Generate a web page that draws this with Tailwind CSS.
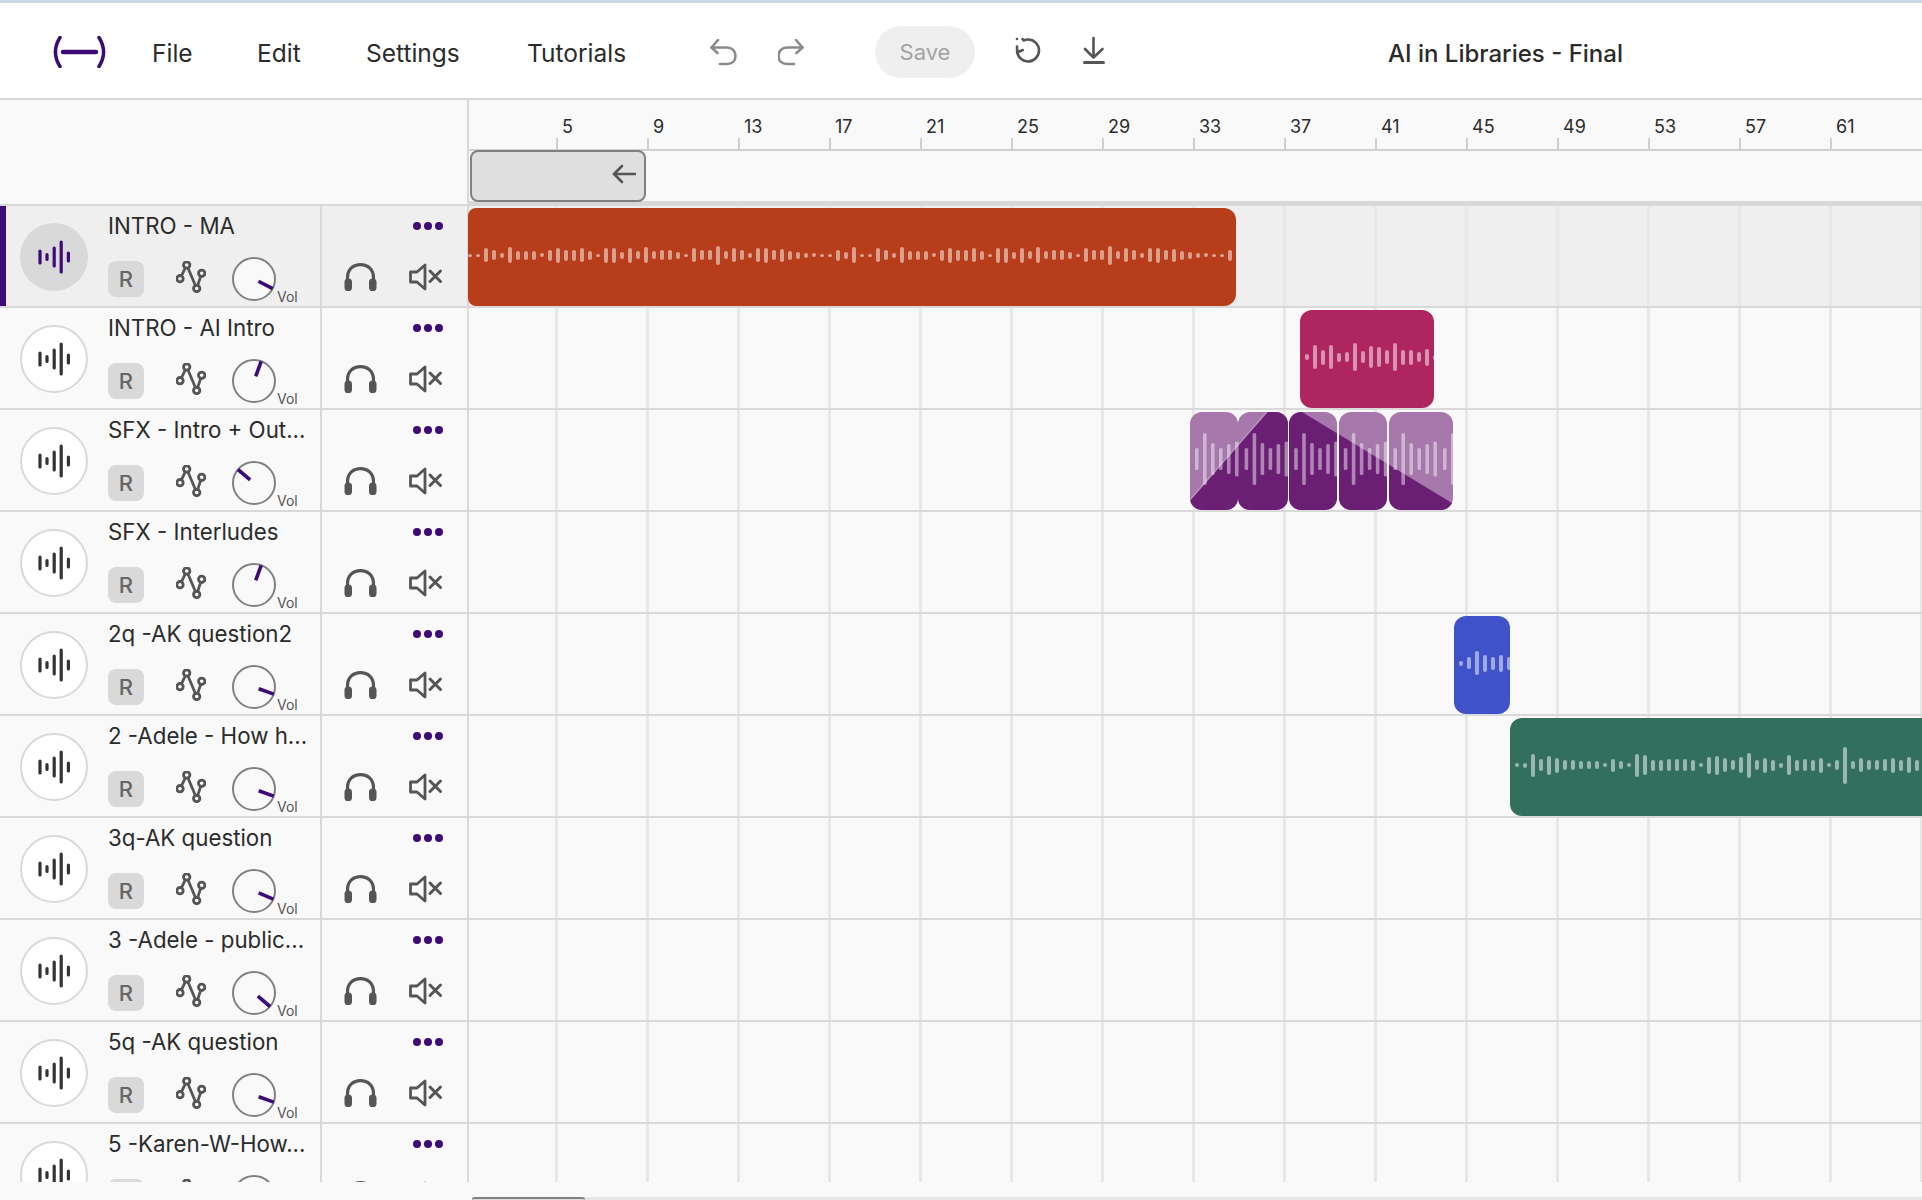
<!DOCTYPE html>
<html lang="en">

<head>
    <meta charset="utf-8" />
    <meta name="viewport" content="width=device-width, initial-scale=1" />
    <title>AI in Libraries - Final</title>
    <script src="https://cdn.jsdelivr.net/npm/@tailwindcss/browser@4"></script>
</head>

<body class="bg-[#f9f9f9] font-['Inter',sans-serif] text-[#2b2b2b] overflow-hidden">
    <div class="flex flex-col w-[1922px] h-[1200px] overflow-hidden relative">
        <div class="h-[3px] bg-[#c9dae7] shrink-0"></div>

        <!-- top bar -->
        <header class="relative flex items-center h-[97px] shrink-0 bg-white border-b-2 border-[#d8d8d8] text-[24.5px]">
            <svg class="absolute left-[51px] top-[33px]" width="57" height="32" viewBox="0 0 57 32" fill="none" stroke="#3d0a78" stroke-linecap="round">
                <path d="M9 1.5 C3 11 3 21 9 30.5" stroke-width="3.5" />
                <path d="M48 1.5 C54 11 54 21 48 30.5" stroke-width="3.5" />
                <path d="M12 16 H45" stroke-width="4.5" />
            </svg>
            <nav class="flex items-center ml-[152px] mt-[5px]">
                <span class="w-[105px]">File</span>
                <span class="w-[109px]">Edit</span>
                <span class="w-[161px]">Settings</span>
                <span class="w-[99px] whitespace-nowrap">Tutorials</span>
            </nav>
            <svg class="ml-[84px] mt-[4px]" width="28" height="28" viewBox="0 0 28 28" fill="none" stroke="#8a8a8a" stroke-width="2.6" stroke-linecap="round" stroke-linejoin="round">
                <path d="M8 1 L1.5 8.5 L7.5 14" />
                <path d="M1.5 8.5 H17 C22 8.5 25.5 12 25.5 17 C25.5 22 22 25 17 25 H10" />
            </svg>
            <svg class="ml-[40px] mt-[4px]" width="28" height="28" viewBox="0 0 28 28" fill="none" stroke="#8a8a8a" stroke-width="2.6" stroke-linecap="round" stroke-linejoin="round">
                <path d="M18 1 L24.5 8.5 L18.5 14" />
                <path d="M24.5 8.5 H9 C4 8.5 0.5 12 0.5 17 C0.5 22 4 25 9 25 H16" />
            </svg>
            <div class="ml-[69px] mt-[3px] flex items-center justify-center w-[100px] h-[52px] rounded-full bg-[#efefef] text-[22px] text-[#a3a3a3]">Save</div>
            <svg class="ml-[39px] -mt-[2px]" width="28" height="28" viewBox="0 0 28 28" fill="none" stroke="#555" stroke-width="2.6" stroke-linecap="round" stroke-linejoin="round">
                <path d="M9.5 4.5 C11 3.8 12.5 3.5 14 3.5 C20 3.5 25 8 25 14.5 C25 20.5 20 25.5 14 25.5 C8.5 25.5 4 21.5 3.2 16" />
                <path d="M3 10.5 L3.2 16.5 L8.8 14" />
                <circle cx="3" cy="3" r="1.3" fill="#555" stroke="none" />
                <circle cx="8.5" cy="3" r="1.3" fill="#555" stroke="none" />
            </svg>
            <svg class="ml-[40px] -mt-[2px]" width="24" height="28" viewBox="0 0 24 28" fill="none" stroke="#555" stroke-width="2.6" stroke-linecap="round" stroke-linejoin="round">
                <path d="M11.5 2 V21" />
                <path d="M3 13 L11.5 21.5 L20.5 13" />
            </svg>
            <div class="absolute left-[1083px] top-[58px] w-[22px] h-[3px] rounded-full bg-[#555]"></div>
            <div class="absolute left-[1388px] top-[37px] font-medium text-[24px] leading-7 text-[#2b2b2b]">AI in Libraries - Final</div>
        </header>

        <!-- ruler -->
        <div class="flex h-[106px] shrink-0">
            <div class="w-[469px] shrink-0 border-r-2 border-b-2 border-[#d8d8d8]"></div>
            <div class="flex-1 relative flex flex-col">
                <div id="ruler" class="flex h-[49px] pl-[87px] border-b-2 border-[#d0d0d0] box-content"></div>
                <div class="flex-1"></div>
                <div class="h-[5px] bg-[#d8d8d8]"></div>
                <div class="absolute left-[1px] top-[50px] w-[176px] h-[52px] rounded-lg border-2 border-[#808080] bg-[#dfdfdf] flex items-center justify-end pr-[8px]">
                    <svg class="-mt-[4px]" width="24" height="20" viewBox="0 0 24 20" fill="none" stroke="#555" stroke-width="2.6" stroke-linecap="round" stroke-linejoin="round">
                        <path d="M2 10 H23" />
                        <path d="M10 2 L2 10 L10 18" />
                    </svg>
                </div>
            </div>
        </div>

        <!-- tracks -->
        <div id="tracks" class="h-[976px] shrink-0 overflow-hidden"></div>

        <!-- scrollbar -->
        <div class="flex-1 relative">
            <div class="absolute left-[472px] right-0 bottom-0 h-[3px] bg-[#e6e6e6]"></div>
            <div class="absolute left-[472px] w-[113px] bottom-0 h-[3px] rounded-t border-t-2 border-[#808080] bg-[#dfdfdf]"></div>
        </div>
    </div>

    <script>
        // track name, knob angle from straight up
        const tracks = [
            ["INTRO - MA", 117],
            ["INTRO - AI Intro", 20],
            ["SFX - Intro + Out...", -50],
            ["SFX - Interludes", 20],
            ["2q -AK question2", 110],
            ["2 -Adele - How h...", 110],
            ["3q-AK question", 113],
            ["3 -Adele - public...", 130],
            ["5q -AK question", 110],
            ["5 -Karen-W-How...", 110],
        ];

        const redBars = [3, 3, 14, 10, 5, 16, 9, 9, 9, 4, 11, 15, 11, 11, 14, 9, 3, 15, 15, 7, 15, 8, 16, 8, 10, 10, 7, 3, 14, 10, 10, 19, 8, 14, 10, 5, 14, 15, 10, 13, 9, 7, 5, 4, 3, 3, 11, 7, 16];
        const pinkBars = [6, 24, 15, 24, 9, 10, 28, 12, 22, 20, 14, 28, 15, 15, 10, 17, 5];
        const blueBars = [5, 12, 24, 17, 13, 17, 13];
        const greenBars = [4, 5, 23, 12, 19, 15, 10, 10, 8, 8, 8, 4, 13, 8, 4, 23, 20, 11, 11, 12, 12, 12, 11, 4, 17, 19, 14, 10, 16, 25, 10, 15, 11, 5, 20, 11, 12, 11, 15, 4, 10, 37, 8, 14, 10, 10, 12, 15, 11, 16, 11, 14];

        function wave(bars, count, pad) {
            let html = "";
            for (let i = 0; i < count; i++) {
                const h = bars[i % bars.length];
                html += `<i class="block w-[4px] shrink-0 rounded-full bg-white/50" style="height:${h}px"></i>`;
            }
            return `<div class="absolute inset-0 pb-[4px] flex items-center gap-[4px] overflow-hidden" style="padding-left:${pad}px">${html}</div>`;
        }

        function clip(left, width, color, radius, content) {
            return `<div class="absolute top-[2px] h-[98px] overflow-hidden" style="left:${left}px;width:${width}px;background:${color};border-radius:${radius}">${content}</div>`;
        }

        function fadedClip() {
            const segs = [[0, 48], [48, 50], [99, 48], [149, 48], [199, 64]];
            const rects = segs.map(s => `<rect x="${s[0]}" y="0" width="${s[1]}" height="98" rx="12" />`).join("");
            const pattern = [22, 52, 32, 22, 30, 35];
            let bars = "";
            for (let n = 0; n < 6; n++) {
                const base = 5 + n * 49.6;
                pattern.forEach((h, i) => {
                    bars += `<rect x="${base + i * 8}" y="${47 - h / 2}" width="3.6" height="${h}" rx="1.5" />`;
                });
            }
            return `<svg class="absolute left-[721px] top-[2px]" width="264" height="98" viewBox="0 0 264 98">
                <defs><clipPath id="segs">${rects}</clipPath></defs>
                <g clip-path="url(#segs)">
                    <rect width="264" height="98" fill="#a678ab" />
                    <polygon points="0,88 77,0 112,0 262,91 262,98 0,98" fill="#6b1f74" />
                    <line x1="0" y1="88" x2="77" y2="0" stroke="#fff" stroke-opacity="0.4" stroke-width="1.2" />
                    <g fill="#fff" fill-opacity="0.45">${bars}</g>
                </g>
            </svg>`;
        }

        const clipsByRow = {
            0: clip(-1, 768, "#b83d1b", "8px 12px 12px 8px", wave(redBars, 96, 0)),
            1: clip(831, 134, "#ae2560", "12px", wave(pinkBars, 17, 5)),
            2: fadedClip(),
            4: clip(985, 56, "#3f52c9", "12px", wave(blueBars, 7, 5)),
            5: clip(1041, 420, "#326f5c", "12px 0 0 12px", wave(greenBars, 52, 5)),
        };

        function trackRow(track, i) {
            const active = i === 0;
            const circle = active ? "bg-[#d9d9d9]" : "bg-white border-2 border-[#d9d9d9]";
            const barColor = active ? "#3d0a78" : "#333";
            return `
            <div class="flex h-[102px] border-b-2 border-[#d9d9d9] ${active ? "bg-[#efefef]" : ""}">
                <div class="relative flex w-[322px] shrink-0 border-r-2 border-[#d9d9d9] pl-[20px] pt-[17px]">
                    ${active ? '<div class="absolute left-0 top-0 bottom-0 w-[6px] bg-[#3d0a78]"></div>' : ""}
                    <div class="flex items-center justify-center w-[68px] h-[68px] rounded-full shrink-0 ${circle}">
                        <svg width="32" height="34" viewBox="0 0 32 34" fill="none" stroke="${barColor}" stroke-width="3.2" stroke-linecap="round">
                            <path d="M2 11 V23 M9 14.5 V19.5 M16.2 8 V26 M23.2 2 V32 M30.4 13 V21" />
                        </svg>
                    </div>
                    <div class="ml-[20px] flex flex-col min-w-0">
                        <div class="text-[22.3px] leading-[28px] -mt-[11px] whitespace-nowrap">${track[0]}</div>
                        <div class="flex items-start mt-[21px]">
                            <div class="flex items-center justify-center w-[36px] h-[36px] rounded-lg bg-[#d9d9d9] text-[22px] font-medium text-[#666]">R</div>
                            <svg class="ml-[32px]" width="30" height="32" viewBox="0 0 30 32" fill="none" stroke="#555" stroke-width="2.8">
                                <circle cx="4" cy="17.7" r="3.2" />
                                <circle cx="10.7" cy="4" r="3.2" />
                                <circle cx="20.7" cy="27.5" r="3.2" />
                                <circle cx="25.7" cy="12.3" r="3.2" />
                                <path d="M5.4 14.8 L9.3 6.9 M12 7 L19.4 24.5 M21.7 24.4 L24.7 15.4" />
                            </svg>
                            <div class="relative ml-[26px] -mt-[4px] w-[44px] h-[44px] rounded-full border-2 border-[#808080] ${active ? "bg-[#f9f9f9]" : ""}">
                                <svg class="absolute left-0 top-0 overflow-visible" width="40" height="40" viewBox="0 0 40 40" fill="none" stroke="#3d0a78" stroke-width="3.6">
                                    <path d="M20 15 L20 -1" transform="rotate(${track[1]} 20 20)" />
                                </svg>
                            </div>
                            <span class="text-[14px] leading-none ml-[1px] mt-[29px] text-[#555]">Vol</span>
                        </div>
                    </div>
                </div>
                <div class="relative w-[147px] shrink-0 border-r-2 border-[#d9d9d9]">
                    <div class="absolute right-[24px] top-[16px] flex gap-[3px]">
                        <i class="block w-[8px] h-[8px] rounded-full bg-[#3d0a78]"></i>
                        <i class="block w-[8px] h-[8px] rounded-full bg-[#3d0a78]"></i>
                        <i class="block w-[8px] h-[8px] rounded-full bg-[#3d0a78]"></i>
                    </div>
                    <svg class="absolute left-[22px] top-[57px]" width="33" height="28" viewBox="0 0 33 28" fill="none">
                        <path d="M3.5 20 V15 C3.5 6 9.5 1.6 16.5 1.6 C23.5 1.6 29.5 6 29.5 15 V20" stroke="#555" stroke-width="3.2" />
                        <rect x="0.5" y="15.5" width="7.5" height="12.5" rx="3.6" fill="#555" />
                        <rect x="25" y="15.5" width="7.5" height="12.5" rx="3.6" fill="#555" />
                    </svg>
                    <svg class="absolute left-[87px] top-[57px]" width="34" height="28" viewBox="0 0 34 28" fill="none" stroke="#555" stroke-width="2.8" stroke-linejoin="round">
                        <path d="M1.5 9 H8 L16 2 V26 L8 19 H1.5 Z" />
                        <path d="M21 8 L31.5 18.5 M31.5 8 L21 18.5" stroke-linecap="round" stroke-width="3" />
                    </svg>
                </div>
                <div class="relative flex-1 bg-[linear-gradient(90deg,#e8e8e8_3px,transparent_3px)] bg-size-[91px_100%] bg-position-[86px_0]">
                    ${clipsByRow[i] || ""}
                </div>
            </div>`;
        }

        document.getElementById("tracks").innerHTML = tracks.map(trackRow).join("");

        let ruler = "";
        for (let n = 5; n <= 61; n += 4) {
            ruler += `
                <div class="w-[91px] shrink-0 flex flex-col justify-end">
                    <span class="ml-[6px] text-[18px] leading-[22px]">${n}</span>
                    <i class="block w-[2px] h-[11px] bg-[#cfcfcf]"></i>
                </div>`;
        }
        document.getElementById("ruler").innerHTML = ruler;
    </script>
</body>

</html>
